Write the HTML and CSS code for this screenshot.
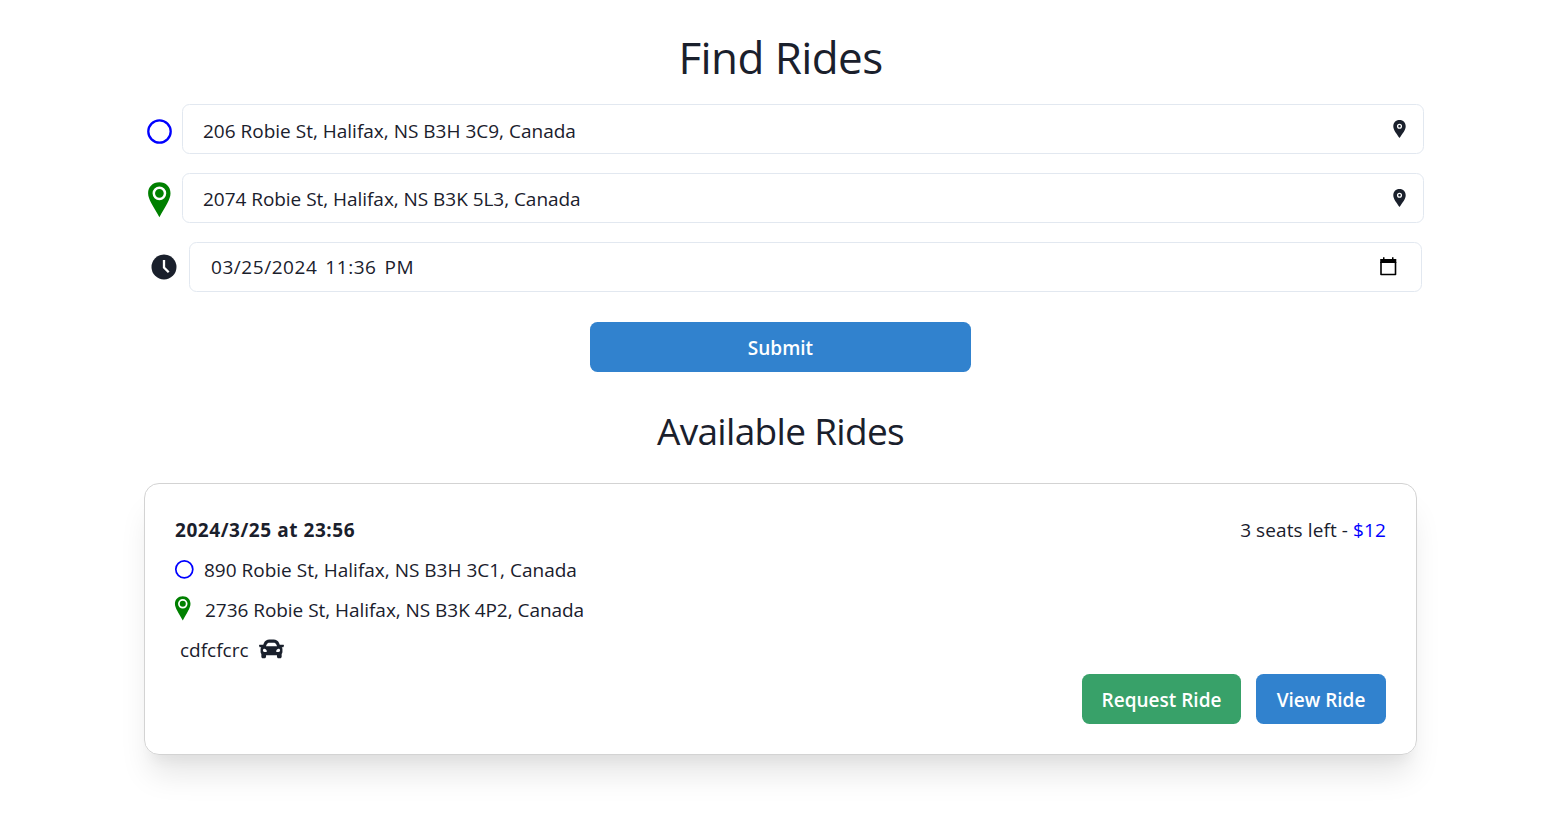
FILE: index.html
```html
<!DOCTYPE html>
<html lang="en">
<head>
<meta charset="utf-8">
<title>Find Rides</title>
<link rel="stylesheet" href="styles.css">
</head>
<body>
<main class="page">
  <h1 class="title"><span>Find Rides</span></h1>
  <form class="form">
    <div class="row">
      <svg class="origin-icon" viewBox="0 0 26 26"><circle cx="13.500" cy="13.500" r="11.200" fill="none" stroke="#00f" stroke-width="2.300"/></svg>
      <div class="field"><span class="t-from">206 Robie St, Halifax, NS B3H 3C9, Canada</span>
        <svg class="mini-pin" viewBox="0 0 13 18"><path d="M6.500 0C2.700 0 .3 2.700 .3 6.200.3 10 3.500 13.500 6.500 18 9.500 13.500 12.700 10 12.700 6.200 12.700 2.700 10.300 0 6.500 0Z" fill="#1a202c"/><circle cx="6.500" cy="6.200" r="1.900" fill="none" stroke="#fff" stroke-width="1.300"/></svg>
      </div>
    </div>
    <div class="row">
      <svg class="dest-icon" viewBox="0 0 24 36"><path d="M12.400 .2C5.600 .2 1.100 4.900 1.100 11.200 1.100 17.500 6.400 24 12.400 35.300 18.400 24 23.500 17.500 23.500 11.200 23.500 4.900 19.200 .2 12.400 .2Z" fill="green"/><circle cx="12.400" cy="11.300" r="5.600" fill="none" stroke="#fff" stroke-width="2.500"/></svg>
      <div class="field field-to"><span class="t-to">2074 Robie St, Halifax, NS B3K 5L3, Canada</span>
        <svg class="mini-pin" viewBox="0 0 13 18"><path d="M6.500 0C2.700 0 .3 2.700 .3 6.200.3 10 3.500 13.500 6.500 18 9.500 13.500 12.700 10 12.700 6.200 12.700 2.700 10.300 0 6.500 0Z" fill="#1a202c"/><circle cx="6.500" cy="6.200" r="1.900" fill="none" stroke="#fff" stroke-width="1.300"/></svg>
      </div>
    </div>
    <div class="row row-date">
      <svg class="clock-icon" viewBox="0 0 26 26"><circle cx="13" cy="13" r="12.500" fill="#1a202c"/><path d="M13 6v7.500l4.700 4.700" fill="none" stroke="#fff" stroke-width="2.300"/></svg>
      <div class="field field-date"><span class="t-date">03/25/2024 11:36 PM</span>
        <svg class="calendar" viewBox="0 0 18 20"><path d="M1 5v12.500h14.500V5" fill="none" stroke="#000" stroke-width="1.600" stroke-linejoin="round"/><path d="M.2 2h16.100v4H.2zM3 .2h1.500V3H3zM12 .2h1.500V3H12z"/></svg>
      </div>
    </div>
    <button class="btn submit" type="button"><span>Submit</span></button>
  </form>
  <h2 class="subtitle"><span>Available Rides</span></h2>
  <article class="card">
    <header class="line head"><strong class="when">2024/3/25 at 23:56</strong><span class="seats">3 seats left - <span class="price">$12</span></span></header>
    <div class="line from"><svg class="origin-small" viewBox="0 0 20 20"><circle cx="10.300" cy="9.300" r="8.500" fill="none" stroke="#00f" stroke-width="1.700"/></svg><span class="t-a">890 Robie St, Halifax, NS B3H 3C1, Canada</span></div>
    <div class="line to"><svg class="dest-small" viewBox="0 0 24 36"><path d="M12.400 .2C5.600 .2 1.100 4.900 1.100 11.200 1.100 17.500 6.400 24 12.400 35.300 18.400 24 23.500 17.500 23.500 11.200 23.500 4.900 19.200 .2 12.400 .2Z" fill="green"/><circle cx="12.400" cy="11.300" r="5.600" fill="none" stroke="#fff" stroke-width="2.500"/></svg><span class="t-b">2736 Robie St, Halifax, NS B3K 4P2, Canada</span></div>
    <div class="line driver"><span class="t-d">cdfcfcrc</span><svg class="car" viewBox="0 0 512 400"><path fill="#1a202c" fill-rule="evenodd" d="M500 112H425L411 78C394 32 350 6 300 6H212C162 6 118 32 101 78L87 112H12C4 112-1 119 1 127L10 157C12 162 17 166 22 166H47C37 176 32 189 32 204V262C32 278 38 293 48 304V358C48 376 62 390 80 390H112C130 390 144 376 144 358V326H368V358C368 376 382 390 400 390H432C450 390 464 376 464 358V304C474 293 480 278 480 262V204C480 189 475 176 465 166H490C495 166 500 162 502 157L511 127C513 119 508 112 500 112ZM160 102C168 82 188 70 212 70H300C324 70 344 82 352 102L370 146H142ZM112 260C93 260 80 247 80 228S93 196 112 196 160 225 160 244 131 260 112 260ZM400 260C381 260 352 263 352 244S381 196 400 196 432 209 432 228 419 260 400 260Z"/></svg></div>
    <footer class="actions"><button class="btn request" type="button"><span>Request Ride</span></button><button class="btn view" type="button"><span>View Ride</span></button></footer>
  </article>
</main>
</body>
</html>
```
FILE: styles.css
```css
* { box-sizing: border-box; }
body { margin: 0; min-height: 820px; background: #fff; color: #1a202c; font: 400 19px/30px "Open Sans", "Noto Sans", sans-serif; }
h1, h2 { margin: 0; font-weight: 400; }
svg { display: block; flex: none; overflow: visible; }
.page { width: 1280px; min-height: 820px; margin-left: 144px; padding-top: 30px; }
.title { width: 1273px; font-size: 44px; line-height: 54px; text-align: center; letter-spacing: -.6px; }
.form { margin-top: 20px; display: flex; flex-direction: column; gap: 19px; }
.row { display: flex; align-items: center; height: 50px; }
.origin-icon { width: 26px; height: 26px; margin: 4px 10px 0 2px; }
.dest-icon { width: 24px; height: 36px; margin: 3px 11px 0 3px; }
.field { flex: 1; height: 50px; display: flex; align-items: center; justify-content: space-between; border: 1px solid #e2e8f0; border-radius: 7.5px; padding: 3px 17.5px 0 20px; white-space: nowrap; }
.field-to { padding-top: 1px; }
.field-to .mini-pin { margin-top: -1px; }
.t-to, .t-b { letter-spacing: -.04px; }
.mini-pin { width: 13px; height: 18px; margin-top: -3px; }
.row-date { padding: 0 2px 0 7px; }
.clock-icon { width: 26px; height: 26px; margin-right: 12px; }
.field-date { padding: 0 23px 0 21px; }
.t-date { letter-spacing: .55px; word-spacing: 2.5px; }
.calendar { width: 18px; height: 20px; }
.btn { height: 50px; border: 0; border-radius: 7.5px; color: #fff; background: #3182ce; font: 600 19px/30px "Open Sans", "Noto Sans", sans-serif; padding: 2px 0 0; white-space: nowrap; }
.submit { width: 381px; margin: 11px 0 0 446px; }
.subtitle { width: 1273px; margin-top: 36px; font-size: 37px; line-height: 46px; text-align: center; letter-spacing: -.68px; }
.card { width: 1273px; height: 272px; margin-top: 29px; padding: 31px 30px 30px; border: 1px solid lightgray; border-radius: 15px; box-shadow: 0 25px 31px -6px rgba(0,0,0,.1), 0 12px 12px -6px rgba(0,0,0,.04); }
.line { display: flex; align-items: center; height: 30px; margin-bottom: 10px; white-space: nowrap; }
.head { justify-content: space-between; }
.when { letter-spacing: .55px; }
.seats { letter-spacing: .1px; }
.price { color: #00f; }
.origin-small { width: 20px; height: 20px; margin: -1px 10px 0 -1px; }
.dest-small { width: 17px; height: 25px; margin: -3px 14px 0 -1px; }
.driver { padding-left: 5px; }
.car { width: 25px; height: 20px; margin: -3px 0 0 10px; }
.actions { display: flex; justify-content: flex-end; gap: 15px; margin-top: -1px; }
.request { width: 159px; background: #38a169; }
.view { width: 130px; }
```
